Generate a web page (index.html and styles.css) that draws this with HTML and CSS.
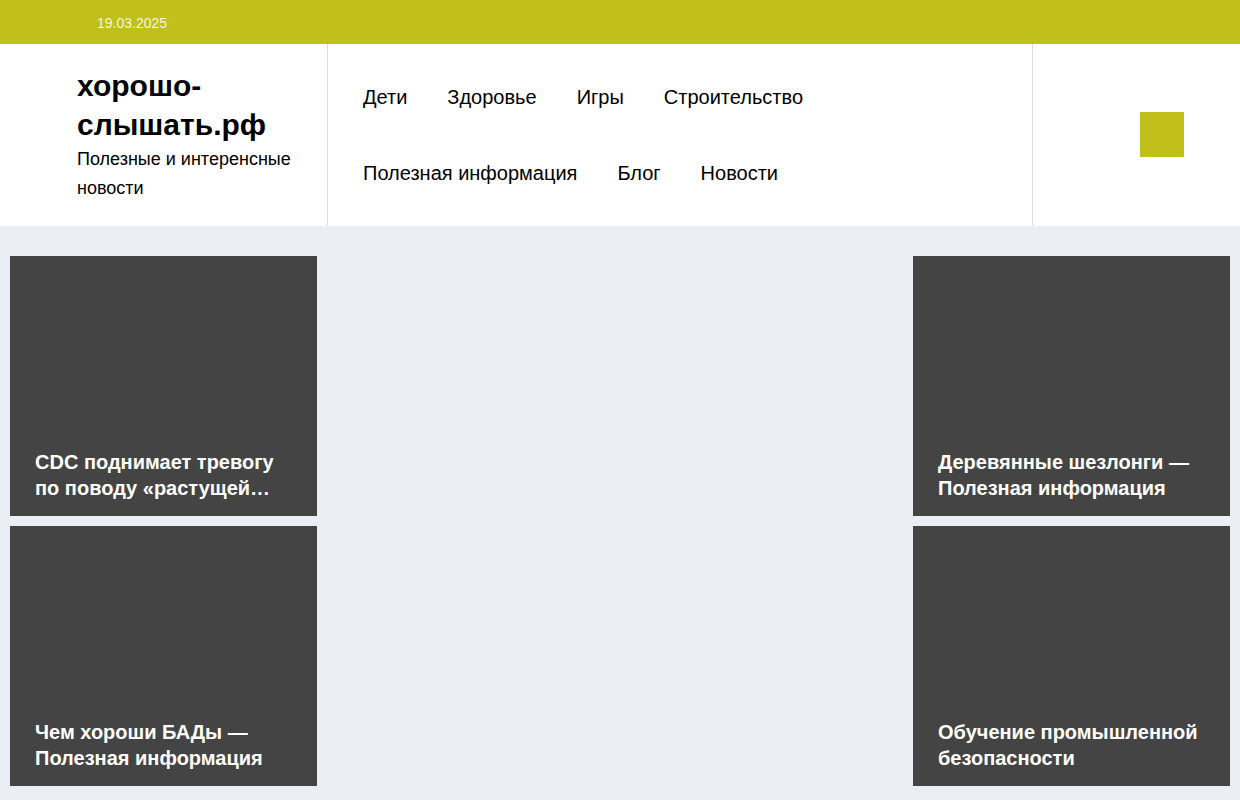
FILE: index.html
```html
<!DOCTYPE html>
<html lang="ru">
<head>
<meta charset="utf-8">
<title>хорошо-слышать.рф</title>
<link rel="stylesheet" href="styles.css">
</head>
<body>
<div class="topbar"><span class="date">19.03.2025</span></div>
<header class="header">
  <div class="brand">
    <div class="brand-title">хорошо-слышать.рф</div>
    <div class="brand-sub">Полезные и интеренсные новости</div>
  </div>
  <nav class="nav">
    <ul class="nav-row">
      <li>Дети</li><li>Здоровье</li><li>Игры</li><li>Строительство</li>
    </ul>
    <ul class="nav-row">
      <li>Полезная информация</li><li>Блог</li><li>Новости</li>
    </ul>
  </nav>
  <div class="side"><span class="square"></span></div>
</header>
<main class="main">
  <div class="col col-left">
    <article class="card"><h3>CDC поднимает тревогу по поводу «растущей…</h3></article>
    <article class="card"><h3>Чем хороши БАДы — Полезная информация</h3></article>
  </div>
  <div class="col col-mid"></div>
  <div class="col col-right">
    <article class="card"><h3>Деревянные шезлонги — Полезная информация</h3></article>
    <article class="card"><h3>Обучение промышленной безопасности</h3></article>
  </div>
</main>
</body>
</html>
```
FILE: styles.css
```css
* { box-sizing: border-box; }
html, body { margin: 0; padding: 0; }
body {
  font-family: "Liberation Sans", Arial, sans-serif;
  background: #edeef3;
  color: #000;
  width: 1240px;
  height: 800px;
  overflow: hidden;
}
.topbar {
  height: 44px;
  background: #c1c01a;
  display: flex;
  align-items: center;
  padding-left: 97px;
}
.date {
  font-size: 14px;
  color: rgba(255,255,255,0.88);
  padding-top: 2px;
}
.header {
  height: 182px;
  background: #fff;
  display: flex;
}
.brand {
  width: 328px;
  border-right: 1px solid #dcdcdc;
  padding: 22px 20px 0 77px;
}
.brand-title {
  font-size: 30px;
  font-weight: 700;
  line-height: 39px;
  width: 200px;
}
.brand-sub {
  font-size: 18px;
  line-height: 29px;
  margin-top: 1px;
}
.nav {
  width: 705px;
  border-right: 1px solid #dcdcdc;
  padding: 21px 0 0 35px;
}
.nav-row {
  list-style: none;
  margin: 0;
  padding: 0;
  display: flex;
  gap: 40px;
  height: 76px;
  font-size: 20px;
  line-height: 23px;
  padding-top: 21px;
}
.side {
  flex: 1;
  padding: 68px 0 0 107px;
}
.square {
  display: block;
  width: 44px;
  height: 45px;
  background: #c1c01a;
}
.main {
  display: grid;
  grid-template-columns: 307px 1fr 317px;
  gap: 10px;
  padding: 30px 10px 0;
}
.col { display: flex; flex-direction: column; gap: 10px; }
.card {
  height: 260px;
  background: #444444;
  display: flex;
  align-items: flex-end;
  padding: 0 25px 15px;
}
.card h3 {
  margin: 0;
  color: #fff;
  font-size: 20px;
  font-weight: 700;
  line-height: 26px;
}
```
